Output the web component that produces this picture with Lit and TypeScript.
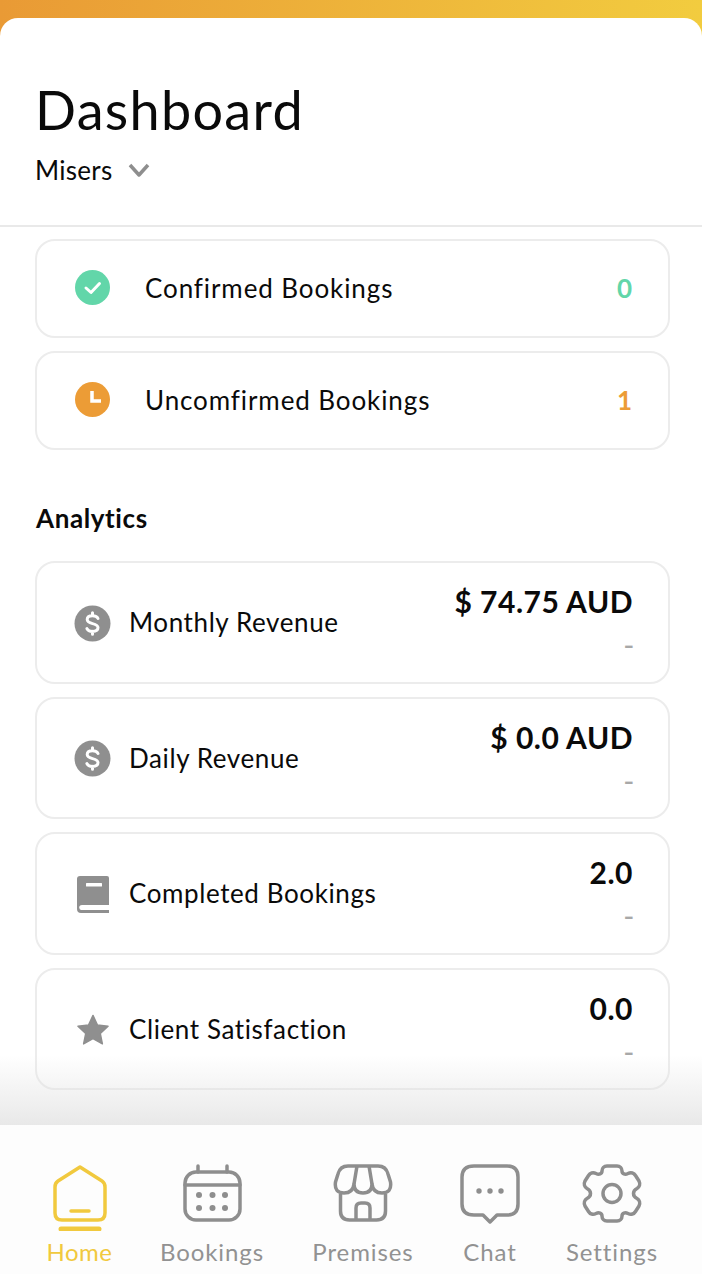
import { LitElement, html, css, svg, unsafeCSS } from "lit";
import { customElement } from "lit/decorators.js";

const dollar = html`<svg viewBox="0 0 37 37" width="37" height="37"><circle cx="18.500" cy="18.500" r="18" fill="#8f8f8f"/><path d="M24 13.500c-.8-1.800-2.800-2.700-5.500-2.700-3.200 0-5.300 1.500-5.300 3.800 0 2.500 2.400 3.300 5.300 4 2.900.7 5.500 1.500 5.500 4 0 2.400-2.300 3.800-5.500 3.800-2.700 0-4.800-1-5.600-2.800M18.500 7.800v3M18.500 26.200v3" fill="none" stroke="#fff" stroke-width="3" stroke-linecap="round"/></svg>`;
const book = html`<svg viewBox="0 0 34 37" width="34" height="37"><path d="M4 0h27a2 2 0 0 1 2 2v27H6a2.800 2.800 0 0 0-2.800 2.800A2.500 2.500 0 0 0 6 34h27v3H5a4 4 0 0 1-4-4V3a3 3 0 0 1 3-3z" fill="#8f8f8f"/><rect x="10" y="7" width="16" height="3.500" fill="#fff" rx=".5"/></svg>`;
const star = html`<svg viewBox="0 0 34 32" width="32" height="31"><path d="M17 1l4.800 10.200 11.200 1.400-8.200 7.700 2.200 11-10-5.500-10 5.500 2.200-11L1 12.600l11.200-1.400z" fill="#8f8f8f" stroke="#8f8f8f" stroke-width="1.500" stroke-linejoin="round"/></svg>`;

const Y = "#f1c93e";
const G = "#8e8e8e";
const homeIcon = svg`<path d="M30 3 L52 17 Q55 19 55 23 V49 Q55 56 48 56 H12 Q5 56 5 49 V23 Q5 19 8 17 Z" fill="none" stroke="${Y}" stroke-width="3.500" stroke-linejoin="round"/><path d="M21 47H39" stroke="${Y}" stroke-width="3.500" stroke-linecap="round"/><path d="M11 65H49" stroke="${Y}" stroke-width="5" stroke-linecap="round"/>`;
const calIcon = svg`<rect x="5" y="8" width="55" height="48" rx="11" fill="none" stroke="${G}" stroke-width="3.500"/><path d="M5 21H60M18 2V8M47 2V8" stroke="${G}" stroke-width="3.500" stroke-linecap="round"/>${[19, 32.5, 45].flatMap((x) => [31, 44].map((y) => svg`<circle cx="${x}" cy="${y}" r="3" fill="${G}"/>`))}`;
const shopIcon = svg`<path d="M6.500 30V47Q6.500 56 15.500 56H42.500Q51.500 56 51.500 47V30" fill="none" stroke="${G}" stroke-width="3.500"/><path d="M14 2H44Q52 2 54 10L56.500 18Q58 29 48 29Q39 29 38 20Q38 29 29 29Q20 29 20 20Q19 29 10 29Q0 29 1.500 18L4 10Q6 2 14 2Z" fill="none" stroke="${G}" stroke-width="3.500" stroke-linejoin="round"/><path d="M20 20L23 2M38 20L35 2" stroke="${G}" stroke-width="3.500"/><path d="M22 56V44Q22 39 27 39H31Q36 39 36 44V56" fill="none" stroke="${G}" stroke-width="3.500"/>`;
const chatIcon = svg`<path d="M16 2H49Q60 2 60 13V40Q60 51 49 51H39L32 58L25 51H16Q4 51 4 40V13Q4 2 16 2Z" fill="none" stroke="${G}" stroke-width="3.500" stroke-linejoin="round"/><circle cx="21" cy="27" r="2.700" fill="${G}"/><circle cx="32" cy="27" r="2.700" fill="${G}"/><circle cx="43" cy="27" r="2.700" fill="${G}"/>`;
const gearIcon = svg`<path d="M18 7C18 4 20 2 23 2H33C36 2 38 4 38 7C38 10 41 11 44 9.500C47 8 50 9 51.500 11.500L55 17C56.500 20 55.500 23 53 24.500C50 26 49.500 27.500 49.500 29.500C49.500 31.500 50 33 53 34.500C55.500 36 56.500 39 55 42L51.500 47.500C50 50 47 51 44 49.500C41 48 38 49 38 52C38 55 36 57 33 57H23C20 57 18 55 18 52C18 49 15 48 12 49.500C9 51 6 50 4.500 47.500L1 42C-.5 39 .5 36 3 34.500C6 33 6.500 31.500 6.500 29.500C6.500 27.500 6 26 3 24.500C.5 23 -.5 20 1 17L4.500 11.500C6 9 9 8 12 9.500C15 11 18 10 18 7Z" fill="none" stroke="${G}" stroke-width="3.500" stroke-linejoin="round"/><circle cx="28" cy="29.500" r="9" fill="none" stroke="${G}" stroke-width="3.500"/>`;

const tabs = [
  { label: "Home", icon: homeIcon, w: 60, h: 67, vb: "0 0 60 67", active: true },
  { label: "Bookings", icon: calIcon, w: 65, h: 58, vb: "0 0 65 58", active: false },
  { label: "Premises", icon: shopIcon, w: 60, h: 58, vb: "-1 0 60 58", active: false },
  { label: "Chat", icon: chatIcon, w: 60, h: 60, vb: "2 0 60 60", active: false },
  { label: "Settings", icon: gearIcon, w: 60, h: 60, vb: "-2 0 60 60", active: false },
];

const stats = [
  { icon: dollar, label: "Monthly Revenue", value: "$ 74.75 AUD" },
  { icon: dollar, label: "Daily Revenue", value: "$ 0.0 AUD" },
  { icon: book, label: "Completed Bookings", value: "2.0" },
  { icon: star, label: "Client Satisfaction", value: "0.0" },
];

@customElement("app-root")
export class AppRoot extends LitElement {
  static styles = css`
    :host {
      display: block;
      width: 702px;
      height: 1274px;
      font-family: "Lato", "Noto Sans", sans-serif;
      color: #0a0a0a;
    }
    .page {
      height: 1274px;
      display: flex;
      flex-direction: column;
      background: linear-gradient(90deg, #e99a35, #f2cc3f);
      padding-top: 18px;
      box-sizing: border-box;
      overflow: hidden;
    }
    .sheet {
      flex: 1;
      position: relative;
      display: flex;
      flex-direction: column;
      background: #fff;
      border-radius: 18px 18px 0 0;
    }
    .head {
      height: 209px;
      flex: none;
      box-sizing: border-box;
      padding: 61px 35px 0;
      border-bottom: 2px solid #e9e9e9;
    }
    h1 {
      margin: 0;
      font-size: 54px;
      line-height: 62px;
      font-weight: 400;
      letter-spacing: 1.3px;
    }
    .org {
      margin-top: 13px;
      display: flex;
      align-items: center;
      gap: 15px;
      font-size: 26px;
      line-height: 32px;
      letter-spacing: 0.3px;
    }
    .body {
      flex: 1;
      padding: 12px 32px 0 35px;
      display: flex;
      flex-direction: column;
    }
    .card {
      border: 2px solid #ececec;
      border-radius: 20px;
      box-sizing: border-box;
      background: #fff;
      display: flex;
      align-items: center;
    }
    .book {
      height: 99px;
      padding: 0 35px 2px 38px;
      margin-bottom: 13px;
      font-size: 26px;
      letter-spacing: 0.9px;
    }
    .circle {
      width: 35px;
      height: 35px;
      flex: none;
      margin-right: 35px;
    }
    .grow { flex: 1; }
    .count {
      font-size: 26px;
      font-weight: 700;
    }
    .green { color: #62d6a9; }
    .orange { color: #ec9c36; }
    h2 {
      margin: 40px 0 28px 1px;
      font-size: 26px;
      line-height: 30px;
      font-weight: 700;
      letter-spacing: 0.6px;
    }
    .stat {
      height: 122.500px;
      padding: 0 35px 0 37px;
      margin-bottom: 13px;
      font-size: 26px;
      letter-spacing: 0.6px;
    }
    .ico {
      width: 37px;
      height: 37px;
      margin-right: 18px;
      margin-top: 2px;
      flex: none;
      display: flex;
      align-items: center;
      justify-content: center;
    }
    .ico svg { display: block; }
    .right {
      display: flex;
      flex-direction: column;
      align-items: flex-end;
      margin-top: -2px;
    }
    .val {
      font-size: 30px;
      line-height: 36px;
      font-weight: 700;
      letter-spacing: 0.5px;
    }
    .dash {
      margin: 10px -2px 0 0;
      font-size: 30px;
      line-height: 30px;
      color: #a8a8a8;
    }
    .fade {
      position: absolute;
      left: 0;
      right: 0;
      bottom: 149px;
      height: 70px;
      background: linear-gradient(180deg, rgba(225,225,225,0), rgba(225,225,225,.75));
      pointer-events: none;
    }
    .tabs {
      position: absolute;
      left: 0;
      right: 0;
      bottom: 0;
      height: 149px;
      box-sizing: border-box;
      background: #fdfdfd;
      display: grid;
      grid-template-columns: 119px 146px 156px 98px 146px;
      padding: 39px 0 0 20px;
    }
    .tab {
      display: flex;
      flex-direction: column;
      align-items: center;
      font-size: 24px;
      color: #929292;
      letter-spacing: 0.9px;
    }
    .tab.active { color: ${unsafeCSS(Y)}; letter-spacing: 0.5px; }
    .tab svg { display: block; flex: none; }
    .iconbox { height: 71px; display: flex; align-items: flex-start; }
    .label { line-height: 30px; margin-top: 2px; }
  `;

  render() {
    return html`<div class="page">
      <div class="sheet">
        <div class="head">
          <h1>Dashboard</h1>
          <div class="org">
            Misers
            <svg width="22" height="16" viewBox="0 0 22 16"><path d="M2 3l9 10 9-10" fill="none" stroke="#8e8e8e" stroke-width="3.500" stroke-linejoin="round"/></svg>
          </div>
        </div>
        <div class="body">
          <div class="card book">
            <svg class="circle" viewBox="0 0 35 35"><circle cx="17.500" cy="17.500" r="17.500" fill="#62d6a9"/><path d="M11 18l5 4.500 8.500-9" fill="none" stroke="#fff" stroke-width="3" stroke-linecap="round" stroke-linejoin="round"/></svg>
            <span class="grow">Confirmed Bookings</span>
            <span class="count green">0</span>
          </div>
          <div class="card book">
            <svg class="circle" viewBox="0 0 35 35"><circle cx="17.500" cy="17.500" r="17.500" fill="#ec9c36"/><path d="M17 9v10h9" fill="none" stroke="#fff" stroke-width="3.500"/></svg>
            <span class="grow">Uncomfirmed Bookings</span>
            <span class="count orange">1</span>
          </div>
          <h2>Analytics</h2>
          ${stats.map(
            (s) => html`<div class="card stat">
              <span class="ico">${s.icon}</span>
              <span class="grow">${s.label}</span>
              <div class="right">
                <span class="val">${s.value}</span>
                <span class="dash">-</span>
              </div>
            </div>`
          )}
        </div>
        <div class="fade"></div>
        <div class="tabs">
          ${tabs.map(
            (t) => html`<div class="tab ${t.active ? "active" : ""}">
              <div class="iconbox"><svg width=${t.w} height=${t.h} viewBox=${t.vb}>${t.icon}</svg></div>
              <span class="label">${t.label}</span>
            </div>`
          )}
        </div>
      </div>
    </div>`;
  }
}
